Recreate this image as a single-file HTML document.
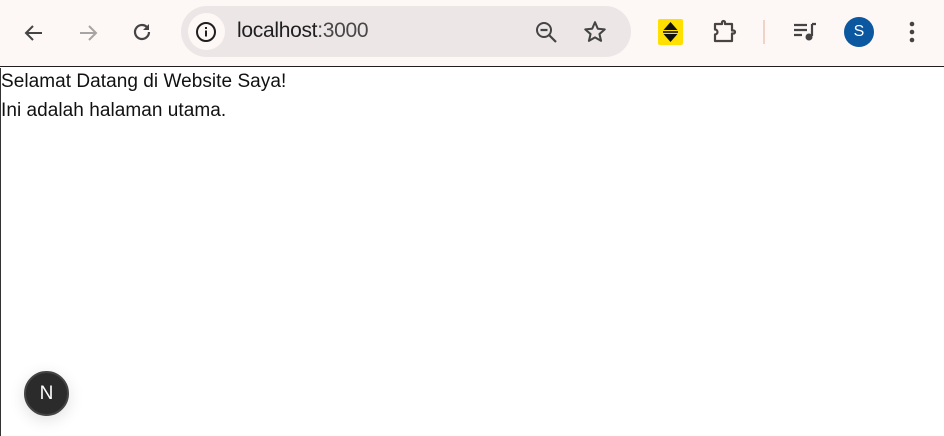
<!DOCTYPE html>
<html><head><meta charset="utf-8"><style>
*{margin:0;padding:0;box-sizing:border-box}
html,body{width:944px;height:436px;overflow:hidden;background:#fff;font-family:"Liberation Sans",Arial,sans-serif}
.bar{position:absolute;left:0;top:0;width:944px;height:67px;background:#fdf7f5;border-bottom:1px solid #1f1f1f}
.omni{position:absolute;left:181px;top:6px;width:450px;height:51px;border-radius:26px;background:#ede6e7}
.info{position:absolute;left:188px;top:13px;width:37px;height:37px;border-radius:50%;background:#fdf7f5}
.url{position:absolute;left:237px;top:19px;font-size:21px;color:#1f1f1f;letter-spacing:-0.3px}
.url span{color:#474747}
svg{position:absolute}
.page{position:absolute;left:0;top:68px;width:944px;height:368px;border-left:1px solid #333}
.t{position:absolute;left:1px;font-size:19px;color:#111;letter-spacing:0.05px}
.n{position:absolute;left:24px;top:371px;width:45px;height:45px;border-radius:50%;background:#2b2b2b;border:2px solid #444;box-shadow:0 4px 16px rgba(0,0,0,.12);color:#fff;font-size:19px;text-align:center;line-height:41px}
</style></head><body>
<div class="bar">
<svg style="left:22px;top:21px" width="24" height="24" viewBox="0 0 24 24"><path d="M20 12H5M11 5l-7 7 7 7" fill="none" stroke="#444" stroke-width="2"/></svg>
<svg style="left:76px;top:21px" width="24" height="24" viewBox="0 0 24 24"><path d="M4 12h15M13 5l7 7-7 7" fill="none" stroke="#a8a4a3" stroke-width="2"/></svg>
<svg style="left:130px;top:20px" width="24" height="24" viewBox="0 0 24 24"><path d="M19 12a7 7 0 1 1-2.2-5.1" fill="none" stroke="#444" stroke-width="2.2"/><path d="M19 4v6h-6z" fill="#444"/></svg>
<div class="omni"></div><div class="info"></div>
<svg style="left:195px;top:21px" width="22" height="22" viewBox="0 0 22 22"><circle cx="11" cy="11" r="9" fill="none" stroke="#1f1f1f" stroke-width="2"/><rect x="10" y="9.5" width="2" height="6" fill="#1f1f1f"/><rect x="10" y="6" width="2" height="2" fill="#1f1f1f"/></svg>
<div class="url">localhost<span>:3000</span></div>
<svg style="left:534px;top:20px" width="26" height="26" viewBox="0 0 26 26"><circle cx="10" cy="10" r="7" fill="none" stroke="#444" stroke-width="2"/><path d="M6.5 10h7M15 15l7 7" stroke="#444" stroke-width="2.2"/></svg>
<svg style="left:582px;top:19px" width="26" height="26" viewBox="0 0 24 24"><path d="M12 3l2.6 6 6.4.6-4.9 4.3 1.5 6.3L12 17l-5.6 3.2 1.5-6.3L3 9.6 9.4 9z" fill="none" stroke="#444" stroke-width="1.9" stroke-linejoin="round"/></svg>
<div style="position:absolute;left:658px;top:19px;width:25px;height:26px;background:#ffe000;border-radius:2px"></div>
<svg style="left:658px;top:19px" width="25" height="26" viewBox="0 0 25 26"><path d="M12.5 3l7 8h-14zM12.5 23l7-8h-14z" fill="#111"/><rect x="5" y="12.2" width="15" height="1.6" fill="#111"/></svg>
<svg style="left:712px;top:19px" width="28" height="26" viewBox="0 0 28 26"><path d="M3 5h7V3.5a1.5 1.5 0 0 1 3 0V5h7v6.5h1.5a1.5 1.5 0 0 1 0 3H20V22H3v-6.5a2.5 2.5 0 0 0 0-5z" fill="none" stroke="#4a4340" stroke-width="2.2" stroke-linejoin="round"/></svg>
<div style="position:absolute;left:763px;top:20px;width:2px;height:24px;background:#f0d2c6"></div>
<svg style="left:792px;top:20px" width="26" height="24" viewBox="0 0 26 24"><path d="M2 5h13M2 10h13M2 15h8" stroke="#444" stroke-width="2.2"/><path d="M20 4h4M20 4v12" stroke="#444" stroke-width="2.2"/><circle cx="17" cy="17" r="3.5" fill="#444"/></svg>
<div style="position:absolute;left:844px;top:17px;width:30px;height:30px;border-radius:50%;background:#0b57a0;color:#fff;font-size:16px;text-align:center;line-height:30px">S</div>
<svg style="left:906px;top:20px" width="12" height="26" viewBox="0 0 12 26"><circle cx="6" cy="4" r="2.3" fill="#444"/><circle cx="6" cy="12" r="2.3" fill="#444"/><circle cx="6" cy="20" r="2.3" fill="#444"/></svg>
</div>
<div class="page"></div>
<div class="t" style="top:71px">Selamat Datang di Website Saya!</div>
<div class="t" style="top:100px">Ini adalah halaman utama.</div>
<div class="n">N</div>
</body></html>
